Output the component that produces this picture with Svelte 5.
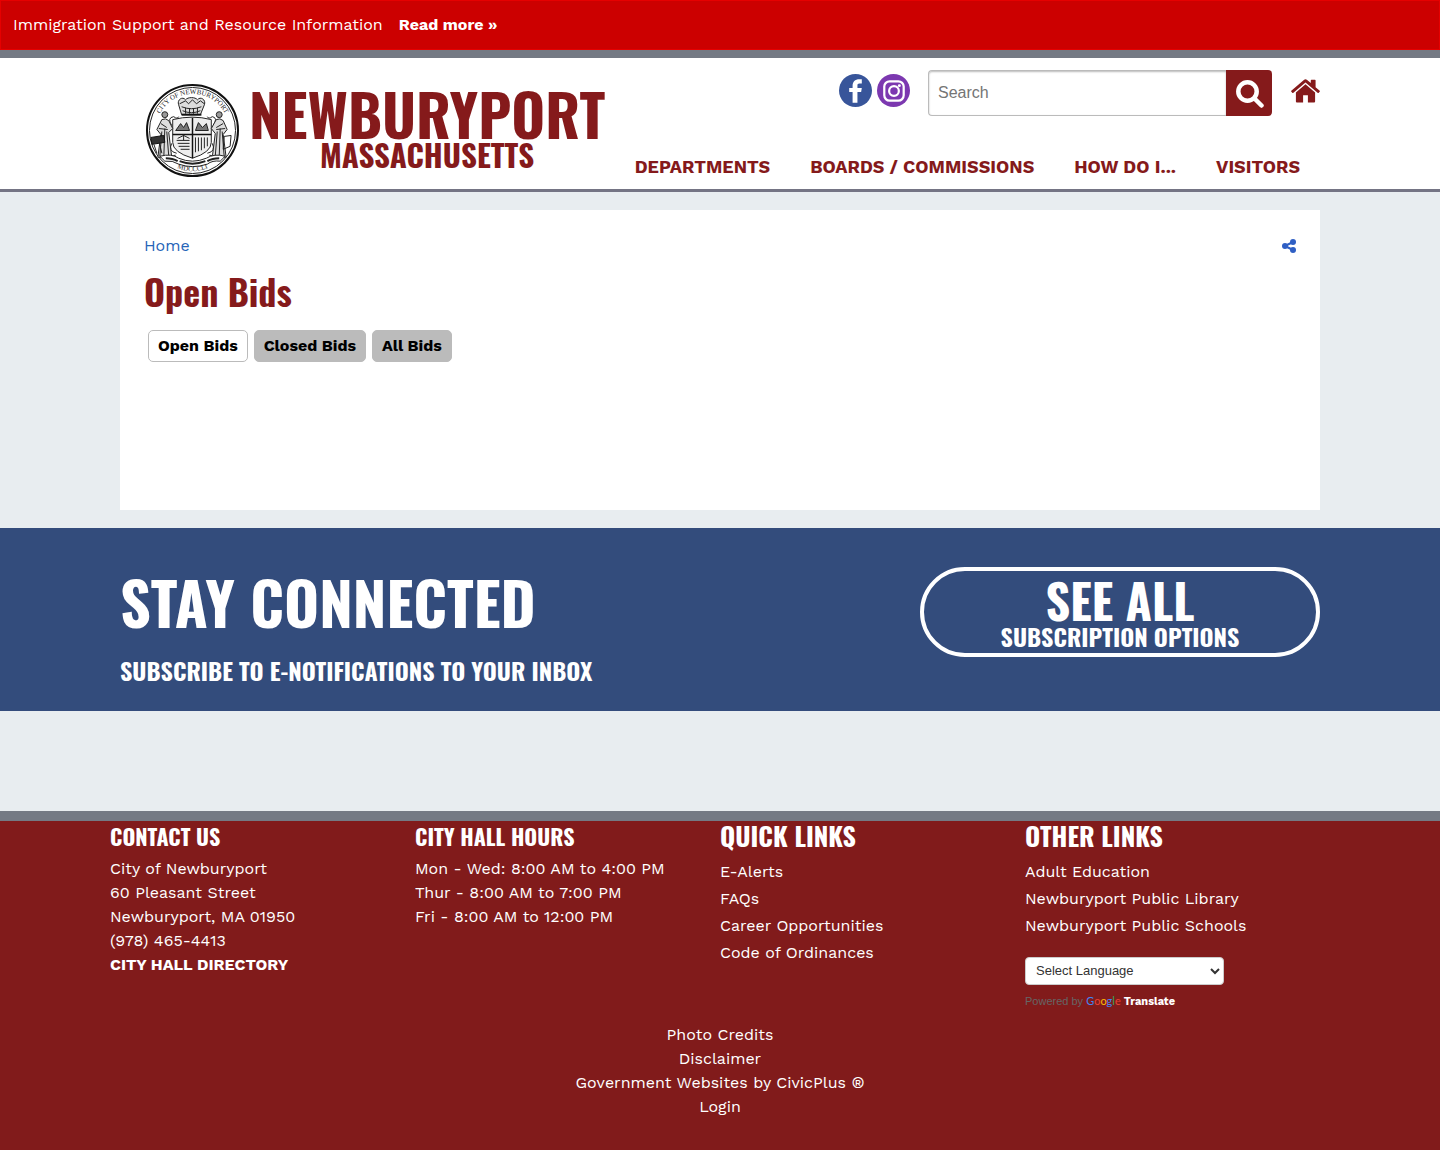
<script>
    const menu = ['Departments', 'Boards / Commissions', 'How Do I...', 'Visitors'];
    const tabs = ['Open Bids', 'Closed Bids', 'All Bids'];

    const hours = [
        'Mon - Wed: 8:00 AM to 4:00 PM',
        'Thur - 8:00 AM to 7:00 PM',
        'Fri - 8:00 AM to 12:00 PM'
    ];
    const quickLinks = ['E-Alerts', 'FAQs', 'Career Opportunities', 'Code of Ordinances'];
    const otherLinks = ['Adult Education', 'Newburyport Public Library', 'Newburyport Public Schools'];

    let activeTab = 'Open Bids';
    let search = '';
    let language = '';
</script>

<div class="alert">
    <span>Immigration Support and Resource Information</span>
    <a href="#alert">Read more »</a>
</div>

<header class="header">
    <div class="header-inner">
        <a class="logo" href="#home">
            <svg class="seal" viewBox="0 0 94 94" aria-hidden="true">
                <defs>
                    <path id="seal-top" d="M10 47a37 37 0 0 1 74 0" />
                    <path id="seal-bottom" d="M17 74a39 39 0 0 0 60 0" />
                </defs>
                <circle cx="47" cy="47" r="46" fill="#fff" stroke="#111" stroke-width="2" />
                <circle cx="47" cy="47" r="43.500" fill="none" stroke="#222" stroke-width="1" />
                <text class="seal-text"><textPath href="#seal-top" startOffset="50%">CITY OF NEWBURYPORT</textPath></text>
                <g fill="none" stroke="#222" stroke-width="1">
                    <!-- crown -->
                    <path d="M36 31l-3-10c-2-5 4-9 7-5 2-3 10-3 12 0 3-4 9 0 7 5l-4 10z" fill="#ddd" />
                    <path d="M36 23q10 4 20 0M37 27q9 4 18 0M34 20l6-3 3 3 4-4 4 4 4-3 4 3M40 24v6M44 25v5M48 25v5M52 24v6" />
                    <path d="M36 31h20" stroke-width="2" stroke="#111" />
                    <!-- shield -->
                    <path d="M27 36q20-5 39 0v23q0 10-19 16-20-6-20-16z" fill="#eee" />
                    <path d="M47 34v41M27 51h39" stroke="#111" stroke-width="1.500" />
                    <path d="M50 54v15M53 54v14M56 54v13M59 54v11M62 54v9M31 57h13M32 60h12M33 63h11M35 66h9M32 55l6-3 6 3M38 51v6" />
                    <path d="M30 47l5-7 3 4 3-5 3 8zM50 47l3-8 4 5 4-4 2 7z" fill="#777" />
                    <path d="M26 42q-5-8 2-9 4 3 5 0M68 42q5-8-1-9-4 3-5 0M26 60q-4 8 5 10M67 60q4 8-5 10M30 72q-4 2-6-2M64 72q4 2 6-2" />
                    <!-- supporters -->
                    <circle cx="19" cy="31" r="3" fill="#999" />
                    <path d="M16 36q4-2 7 1l4 8-4 4 3 25H12l3-23-4-5z" fill="#ddd" />
                    <path d="M16 48l-2 25M19 45l-1 29M21 48l2 25M15 40l6 4M13 45l9 1" />
                    <circle cx="74" cy="31" r="3" fill="#999" />
                    <path d="M71 36q4-2 7 1l4 9-4 5 3 23H67l3-24-4-5z" fill="#ddd" />
                    <path d="M72 48l-2 25M75 45l-1 29M77 48l2 25M71 44l7-4M71 46l9-1" />
                    <path d="M5 54l13-2 1 7-13 2z" fill="#333" stroke="#111" />
                    <path d="M8 61l3 9M14 61l2 9M79 53l7-1-1 11-7 3z" />
                    <!-- ribbon -->
                    <path d="M14 73q12-3 19 2 14 6 28 0 8-5 19-2l-5 5q-8-1-13 3-15 5-29 0-6-4-14-3z" fill="#fff" />
                    <path d="M20 75q7 0 12 3M74 75q-7 0-12 3M34 78q13 5 26 0" stroke-width="2" />
                </g>
                <text class="seal-text"><textPath href="#seal-bottom" startOffset="50%">MDCCCLI</textPath></text>
            </svg>
            <span class="wordmark">
                <span class="city">Newburyport</span>
                <span class="state">Massachusetts</span>
            </span>
        </a>

        <div class="header-side">
            <div class="tools">
                <div class="social">
                    <a href="#facebook" aria-label="Facebook">
                        <svg width="33" height="33" viewBox="0 0 34 34">
                            <circle cx="17" cy="17" r="17" fill="#38559a" />
                            <path d="M14 29.500V18.500h-3.500v-4H14V12c0-4.500 3-7.500 9.500-6.500v4.300h-2.500c-1.500 0-2 .7-2 2v2.700h4.500l-.7 4H19v11z" fill="#fff" />
                        </svg>
                    </a>
                    <a href="#instagram" aria-label="Instagram">
                        <svg width="33" height="33" viewBox="0 0 34 34">
                            <circle cx="17" cy="17" r="17" fill="#7c38b0" />
                            <g fill="none" stroke="#fff" stroke-width="2.300">
                                <rect x="7.500" y="7.500" width="20" height="20" rx="5.500" />
                                <circle cx="17.500" cy="17.500" r="5" />
                            </g>
                            <circle cx="23" cy="12" r="1.500" fill="#fff" />
                        </svg>
                    </a>
                </div>
                <form class="search" on:submit|preventDefault>
                    <input type="text" placeholder="Search" aria-label="Search" bind:value={search} />
                    <button type="submit" aria-label="Search">
                        <svg width="28" height="28" viewBox="0 0 28 28" fill="none" stroke="#fff">
                            <circle cx="11.500" cy="11.500" r="9.200" stroke-width="4.500" />
                            <path d="M18.500 18.500l7 7" stroke-width="4.500" stroke-linecap="round" />
                        </svg>
                    </button>
                </form>
                <a class="home" href="#home" aria-label="Home">
                    <svg width="29" height="24" viewBox="0 0 30 25" fill="#851a1b">
                        <path d="M15 5.500L5 14v9.500q0 1 1 1h6.500V17h5v7.500H24q1 0 1-1V14z" />
                        <path d="M29.800 12.200L25.500 8.500V1.500q0-.7-.7-.7h-3.600q-.7 0-.7.700v2.700L16.700 1Q15 -.4 13.300 1L.2 12.200q-.4.400-.1.900l1.100 1.300q.4.400.9.100L15 3.700l12.900 10.800q.5.300.9-.1l1.100-1.300q.3-.5-.1-.9z" />
                    </svg>
                </a>
            </div>
            <nav class="menu">
                {#each menu as item}
                    <a href="#menu">{item}</a>
                {/each}
            </nav>
        </div>
    </div>
</header>

<main class="content">
    <div class="breadcrumb">
        <a href="#home">Home</a>
        <a href="#share" aria-label="Share">
            <svg width="14" height="14" viewBox="0 0 14 14" fill="#2f5fc4">
                <path d="M3 7l8-4M3 7l8 4" stroke="#2f5fc4" stroke-width="2" />
                <circle cx="3" cy="7" r="3" />
                <circle cx="11" cy="3" r="3" />
                <circle cx="11" cy="11" r="3" />
            </svg>
        </a>
    </div>
    <h1>Open Bids</h1>
    <div class="tabs">
        {#each tabs as tab}
            <button class:active={activeTab === tab} on:click={() => (activeTab = tab)}>{tab}</button>
        {/each}
    </div>
</main>

<section class="connect">
    <div class="connect-inner">
        <div>
            <h2>Stay Connected</h2>
            <p>Subscribe to e-notifications to your inbox</p>
        </div>
        <a class="see-all" href="#subscribe">
            <span class="big">See All</span>
            <span class="small">Subscription Options</span>
        </a>
    </div>
</section>

<footer class="footer">
    <div class="columns">
        <div>
            <h3>Contact Us</h3>
            <p>City of Newburyport</p>
            <p>60 Pleasant Street</p>
            <p>Newburyport, MA 01950</p>
            <p>(978) 465-4413</p>
            <a class="directory" href="#directory">CITY HALL DIRECTORY</a>
        </div>
        <div>
            <h3>City Hall Hours</h3>
            {#each hours as line}
                <p>{line}</p>
            {/each}
        </div>
        <div>
            <h3 class="large">Quick Links</h3>
            <ul>
                {#each quickLinks as link}
                    <li><a href="#link">{link}</a></li>
                {/each}
            </ul>
        </div>
        <div>
            <h3 class="large">Other Links</h3>
            <ul>
                {#each otherLinks as link}
                    <li><a href="#link">{link}</a></li>
                {/each}
            </ul>
            <select aria-label="Select Language" bind:value={language}>
                <option value="">Select Language</option>
                <option value="es">Spanish</option>
                <option value="fr">French</option>
            </select>
            <div class="powered">
                Powered by
                <span class="google"><i class="b">G</i><i class="r">o</i><i class="y">o</i><i class="b">g</i><i class="g">l</i><i class="r">e</i></span>
                <a href="#translate">Translate</a>
            </div>
        </div>
    </div>
    <div class="legal">
        <a href="#credits">Photo Credits</a>
        <a href="#disclaimer">Disclaimer</a>
        <span>Government Websites by <a href="#civicplus">CivicPlus ®</a></span>
        <a href="#login">Login</a>
    </div>
</footer>

<style>
    :global(body) {
        background: #e8edf0;
        color: #000;
        font-family: "Work Sans", Inter, sans-serif;
        font-size: 16px;
        line-height: 24px;
    }

    a {
        color: inherit;
        text-decoration: none;
    }

    h1, h2, h3, p, ul {
        margin: 0;
        padding: 0;
    }

    svg {
        display: block;
    }

    h1, h2, h3,
    .wordmark,
    .connect {
        font-family: Oswald, "Liberation Sans Narrow", "Liberation Sans", sans-serif;
        font-weight: 700;
    }

    .alert {
        display: flex;
        gap: 16px;
        padding: 12px;
        border: 1px solid #e60000;
        background: #cc0000;
        color: #fff;
    }

    .alert a {
        font-weight: 700;
    }

    .header {
        border-top: 8px solid #747a84;
        border-bottom: 3px solid #747484;
        background: #fff;
    }

    .header-inner {
        display: flex;
        justify-content: space-between;
        box-sizing: border-box;
        max-width: 1200px;
        height: 131px;
        margin: 0 auto;
    }

    .logo {
        display: flex;
        gap: 10px;
        padding: 26px 0 0 26px;
        color: #851a1b;
    }

    .seal {
        width: 93px;
        height: 93px;
    }

    .seal-text {
        fill: #222;
        font: 7px "Liberation Serif", serif;
        text-anchor: middle;
    }

    .wordmark {
        display: flex;
        flex-direction: column;
        align-items: center;
        padding-top: 3px;
        text-transform: uppercase;
    }

    .city {
        font-size: 58px;
        line-height: 52px;
    }

    .state {
        font-size: 31px;
        line-height: 30px;
    }

    .tools {
        display: flex;
        justify-content: flex-end;
        padding-top: 12px;
    }

    .social {
        display: flex;
        gap: 5px;
        padding-top: 4px;
    }

    .search {
        display: flex;
        margin: 0 19px 0 18px;
    }

    .search input {
        box-sizing: border-box;
        width: 298px;
        height: 46px;
        padding: 0 9px;
        border: 1px solid #bbb;
        border-right: 0;
        border-radius: 4px 0 0 4px;
        box-shadow: inset 0 1px 2px #bbb;
        font: 16px "Liberation Sans", Arial, sans-serif;
    }

    .search input::placeholder {
        color: #757575;
    }

    .search button {
        display: flex;
        align-items: center;
        justify-content: center;
        width: 46px;
        height: 46px;
        padding: 2px 0 0 2px;
        border: 0;
        border-radius: 0 4px 4px 0;
        background: #851a1b;
    }

    .home {
        padding-top: 9px;
    }

    .menu {
        display: flex;
        justify-content: flex-end;
        gap: 40px;
        padding: 39px 20px 0 0;
        color: #851a1b;
        font-size: 18px;
        font-weight: 700;
        text-transform: uppercase;
    }

    .content {
        box-sizing: border-box;
        max-width: 1200px;
        min-height: 300px;
        margin: 18px auto;
        padding: 24px;
        background: #fff;
    }

    .breadcrumb {
        display: flex;
        align-items: center;
        justify-content: space-between;
        color: #2765b8;
    }

    h1 {
        padding: 9px 0 11px;
        color: #851a1b;
        font-size: 36px;
        line-height: 48px;
    }

    .tabs {
        display: flex;
        gap: 6px;
        padding: 4px;
    }

    .tabs button {
        height: 32px;
        padding: 0 9px 2px;
        border: 1px solid #bbb;
        border-radius: 5px;
        background: #bbb;
        color: #000;
        font-family: inherit;
        font-size: 16px;
        font-weight: 700;
    }

    .tabs button.active {
        background: #fff;
    }

    .connect {
        padding: 39px 0 24px;
        background: #334c7c;
        color: #fff;
        text-transform: uppercase;
    }

    .connect-inner {
        display: flex;
        align-items: flex-start;
        justify-content: space-between;
        max-width: 1200px;
        margin: 0 auto;
    }

    h2 {
        font-size: 60px;
        line-height: 68px;
    }

    .connect p {
        padding: 20px 0 2px;
        font-size: 24px;
        line-height: 30px;
    }

    .see-all {
        display: flex;
        flex-direction: column;
        align-items: center;
        box-sizing: border-box;
        width: 400px;
        height: 90px;
        padding-top: 5px;
        border: 4px solid #fff;
        border-radius: 45px;
    }

    .big {
        font-size: 48px;
        line-height: 48px;
    }

    .small {
        font-size: 24px;
        line-height: 24px;
    }

    .footer {
        margin-top: 100px;
        padding-bottom: 31px;
        border-top: 10px solid #747a84;
        background: #811b1b;
        color: #fff;
    }

    .columns {
        display: grid;
        grid-template-columns: repeat(4, 1fr);
        max-width: 1220px;
        margin: 0 auto;
    }

    h3 {
        padding-bottom: 6px;
        font-size: 22px;
        line-height: 30px;
        text-transform: uppercase;
    }

    .large {
        padding-bottom: 7px;
        font-size: 26px;
    }

    .directory {
        font-weight: 700;
    }

    ul {
        list-style: none;
    }

    li {
        padding: 2px 0 1px;
    }

    select {
        display: block;
        width: 199px;
        height: 28px;
        margin-top: 18px;
        padding: 0 6px 2px;
        border: 1px solid #ccc;
        border-radius: 4px;
        background: #fff;
        color: #333;
        font: 13px "Liberation Sans", Arial, sans-serif;
    }

    .powered {
        padding-top: 4px;
        color: #666;
        font: 11px/24px "Liberation Sans", Arial, sans-serif;
    }

    .powered a {
        color: #fff;
        font-family: "Work Sans", Inter, sans-serif;
        font-weight: 700;
    }

    .google {
        font-family: Lato, sans-serif;
    }

    .google i {
        font-style: normal;
    }

    .b { color: #4285f4; }
    .r { color: #ea4335; }
    .y { color: #fbbc05; }
    .g { color: #34a853; }

    .legal {
        display: flex;
        flex-direction: column;
        align-items: center;
        padding-top: 9px;
    }
</style>
